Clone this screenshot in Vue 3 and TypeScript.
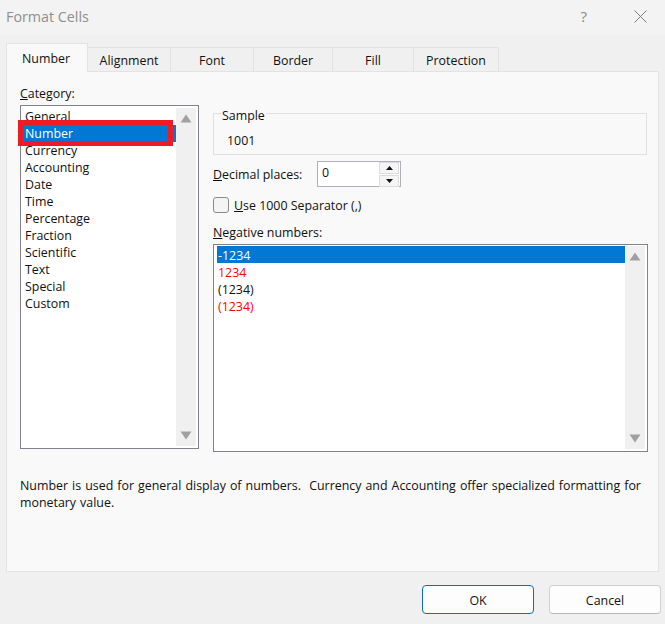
<script setup lang="ts">
const tabs: string[] = ['Alignment', 'Font', 'Border', 'Fill', 'Protection']
const categories: string[] = ['General', 'Number', 'Currency', 'Accounting', 'Date', 'Time', 'Percentage', 'Fraction', 'Scientific', 'Text', 'Special', 'Custom']
const negatives = [
  { text: '-1234', cls: 'selected' },
  { text: '1234', cls: 'red' },
  { text: '(1234)', cls: '' },
  { text: '(1234)', cls: 'red' },
]
</script>

<template>
  <div class="window">
    <header class="titlebar">
      <span class="title">Format Cells</span>
      <span class="help">?</span>
      <svg class="close" width="13" height="13" viewBox="0 0 13 13"><path d="M0.5 0.5 12.5 12.5M12.5 0.5 0.5 12.5" stroke="#7b7b7b" stroke-width="1" fill="none" /></svg>
    </header>

    <nav class="tabs">
      <div class="tab active">Number</div>
      <div v-for="t in tabs" :key="t" class="tab" :class="'tab-' + t.toLowerCase()">{{ t }}</div>
    </nav>

    <main class="panel">
      <div class="columns">
        <section class="left">
          <div class="label cat-label"><u>C</u>ategory:</div>
          <div class="listbox cat-list">
            <ul class="items">
              <li v-for="c in categories" :key="c" :class="{ selected: c === 'Number' }">{{ c }}</li>
            </ul>
            <div class="scrollbar">
              <svg width="12" height="9" viewBox="0 0 12 9"><path d="M6 0.5 11.5 8.5H0.5Z" fill="#a0a0a0" /></svg>
              <svg width="12" height="9" viewBox="0 0 12 9"><path d="M6 8.5 11.5 0.5H0.5Z" fill="#a0a0a0" /></svg>
            </div>
          </div>
          <div class="annotation"></div>
        </section>

        <section class="right">
          <fieldset class="sample">
            <legend>Sample</legend>
            <div class="sample-value">1001</div>
          </fieldset>

          <div class="decimal-row">
            <span class="label decimal-label"><u>D</u>ecimal places:</span>
            <div class="spin">
              <span class="spin-value">0</span>
              <div class="spin-buttons">
                <div class="spin-btn"><svg width="7" height="4" viewBox="0 0 7 4"><path d="M3.5 0 7 4H0Z" fill="#111" /></svg></div>
                <div class="spin-btn"><svg width="7" height="4" viewBox="0 0 7 4"><path d="M3.5 4 7 0H0Z" fill="#111" /></svg></div>
              </div>
            </div>
          </div>

          <div class="check-row">
            <span class="checkbox"></span>
            <span class="label check-label"><u>U</u>se 1000 Separator (,)</span>
          </div>

          <div class="label neg-label"><u>N</u>egative numbers:</div>
          <div class="listbox neg-list">
            <ul class="items">
              <li v-for="(n, i) in negatives" :key="i" :class="n.cls">{{ n.text }}</li>
            </ul>
            <div class="scrollbar">
              <svg width="12" height="9" viewBox="0 0 12 9"><path d="M6 0.5 11.5 8.5H0.5Z" fill="#a0a0a0" /></svg>
              <svg width="12" height="9" viewBox="0 0 12 9"><path d="M6 8.5 11.5 0.5H0.5Z" fill="#a0a0a0" /></svg>
            </div>
          </div>
        </section>
      </div>

      <p class="description">Number is used for general display of numbers.&nbsp; Currency and Accounting offer specialized formatting for monetary value.</p>
    </main>

    <footer class="footer">
      <button class="btn primary">OK</button>
      <button class="btn">Cancel</button>
    </footer>
  </div>
</template>

<style scoped>
.window {
  width: 665px;
  height: 624px;
  background: #f0f0f0;
  display: flex;
  flex-direction: column;
  font-family: "Open Sans", "Noto Sans", sans-serif;
  font-size: 12.4px;
  line-height: 17px;
  color: #111;
  overflow: hidden;
}
.titlebar {
  height: 35px;
  background: #f3f3f3;
  display: flex;
  align-items: center;
  padding: 0 0 3px 6px;
  box-sizing: border-box;
  flex: none;
}
.title { font-size: 14.3px; color: #8f8f8f; flex: 1; }
.help { font-size: 15px; color: #8a8a8a; margin-right: 47px; }
.close { margin-right: 18px; }

.tabs {
  display: flex;
  align-items: flex-end;
  height: 36px;
  padding-left: 6px;
  flex: none;
  position: relative;
  z-index: 1;
}
.tab {
  height: 24px;
  width: 83px;
  box-sizing: border-box;
  border: 1px solid #e3e3e3;
  border-left: none;
  border-bottom: none;
  background: #f0f0f0;
  text-align: center;
  line-height: 25px;
}
.tab.active {
  width: 82px;
  height: 29px;
  margin-bottom: -1px;
  background: #f9f9f9;
  border-left: 1px solid #e3e3e3;
  padding-right: 2px;
  line-height: 29px;
}
.tab-border { width: 79px; }
.tab-fill { width: 81px; }
.tab-protection { width: 85px; }

.panel {
  width: 653px;
  height: 501px;
  margin-left: 6px;
  box-sizing: border-box;
  border: 1px solid #e3e3e3;
  background: #f9f9f9;
  padding: 13px 11px 0 13px;
  flex: none;
}
.columns {
  display: flex;
  gap: 14px;
}
.left {
  width: 179px;
  position: relative;
  flex: none;
}
.cat-label { height: 20px; }
.listbox {
  box-sizing: border-box;
  border: 1px solid #82828e;
  background: #fff;
  display: flex;
  padding: 2px;
}
.cat-list { height: 344px; }
.items {
  list-style: none;
  margin: 0;
  padding: 0;
  flex: 1;
  min-width: 0;
}
.items li {
  height: 17px;
  padding-left: 2px;
  line-height: 17px;
  white-space: nowrap;
}
.items li.selected { background: #0078d4; color: #fff; }
.items li.red { color: #ff0000; }
.scrollbar {
  width: 20px;
  background: #f0f0f0;
  flex: none;
  display: flex;
  flex-direction: column;
  justify-content: space-between;
  align-items: center;
  padding: 6px 0 6px;
  box-sizing: border-box;
}
.annotation {
  position: absolute;
  left: -2px;
  top: 35px;
  width: 155px;
  height: 26px;
  box-sizing: border-box;
  border: 5px solid #ed1c24;
}
.right {
  width: 435px;
  flex: none;
  padding-top: 22px;
}
.sample {
  margin: 0;
  padding: 0;
  height: 48px;
  width: 434px;
  box-sizing: border-box;
  border: 1px solid #e0e0e0;
  min-inline-size: 0;
}
.sample legend {
  padding: 0 1px;
  margin-left: 7px;
  line-height: 17px;
  height: 13px;
}
.sample-value {
  padding-left: 13px;
  margin-top: 12px;
}
.decimal-row {
  display: flex;
  align-items: center;
  margin-top: 6px;
  height: 26px;
}
.decimal-label { width: 104px; }
.spin {
  width: 84px;
  height: 26px;
  box-sizing: border-box;
  border: 1px solid #b0b0b8;
  background: #fff;
  display: flex;
  align-items: center;
  padding-left: 4px;
}
.spin-value { flex: 1; margin-top: -3px; }
.spin-buttons {
  width: 20px;
  display: flex;
  flex-direction: column;
  gap: 1px;
  margin-right: 1px;
}
.spin-btn {
  height: 10px;
  background: #f5f5f5;
  border: 1px solid #dcdcdc;
  display: flex;
  align-items: center;
  justify-content: center;
}
.check-row {
  display: flex;
  align-items: center;
  margin-top: 9px;
  height: 17px;
}
.check-label { padding-top: 2px; }
.checkbox {
  width: 16px;
  height: 16px;
  box-sizing: border-box;
  border: 1px solid #8a8a8a;
  border-radius: 3px;
  background: #f4f4f4;
  margin-right: 5px;
}
.neg-label { margin-top: 11px; height: 20px; }
.neg-list { height: 208px; padding: 1px 2px 2px 3px; }
.neg-list .items li { padding-left: 1px; line-height: 19px; }
.description {
  margin: 25px 0 0;
  width: 625px;
  word-spacing: 0.85px;
}
.footer {
  display: flex;
  justify-content: flex-end;
  gap: 15px;
  padding: 13px 4px 0 0;
}
.btn {
  width: 112px;
  height: 29px;
  box-sizing: border-box;
  border: 1px solid #d0d0d0;
  border-bottom-color: #b8b8b8;
  border-radius: 4px;
  background: #fdfdfd;
  font: inherit;
  color: #111;
  padding: 1px 0 0;
}
.btn.primary {
  border: 1px solid #0f6cbd;
}
</style>
